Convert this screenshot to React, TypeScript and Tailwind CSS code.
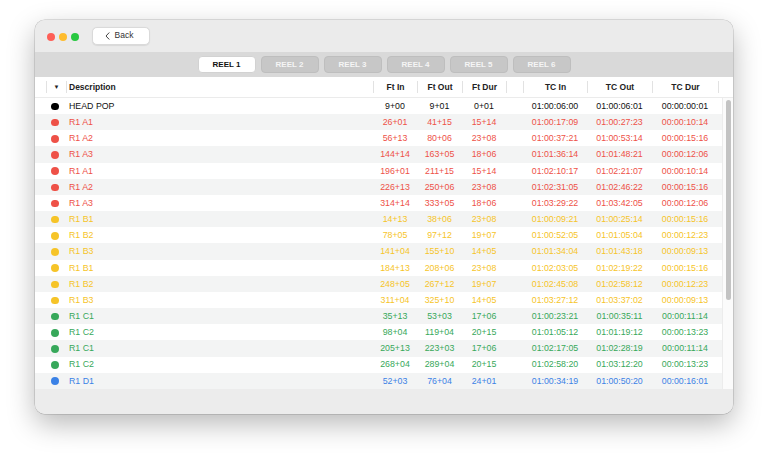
import React from "react";

type Row = [string, string, string, string, string, string, string, string];

const C: Record<string, string> = {
  k: "#000000",
  r: "#ee5147",
  y: "#f6c428",
  g: "#37a85a",
  b: "#3b82e6",
};

const rows: Row[] = [
  ["k", "HEAD POP", "9+00", "9+01", "0+01", "01:00:06:00", "01:00:06:01", "00:00:00:01"],
  ["r", "R1 A1", "26+01", "41+15", "15+14", "01:00:17:09", "01:00:27:23", "00:00:10:14"],
  ["r", "R1 A2", "56+13", "80+06", "23+08", "01:00:37:21", "01:00:53:14", "00:00:15:16"],
  ["r", "R1 A3", "144+14", "163+05", "18+06", "01:01:36:14", "01:01:48:21", "00:00:12:06"],
  ["r", "R1 A1", "196+01", "211+15", "15+14", "01:02:10:17", "01:02:21:07", "00:00:10:14"],
  ["r", "R1 A2", "226+13", "250+06", "23+08", "01:02:31:05", "01:02:46:22", "00:00:15:16"],
  ["r", "R1 A3", "314+14", "333+05", "18+06", "01:03:29:22", "01:03:42:05", "00:00:12:06"],
  ["y", "R1 B1", "14+13", "38+06", "23+08", "01:00:09:21", "01:00:25:14", "00:00:15:16"],
  ["y", "R1 B2", "78+05", "97+12", "19+07", "01:00:52:05", "01:01:05:04", "00:00:12:23"],
  ["y", "R1 B3", "141+04", "155+10", "14+05", "01:01:34:04", "01:01:43:18", "00:00:09:13"],
  ["y", "R1 B1", "184+13", "208+06", "23+08", "01:02:03:05", "01:02:19:22", "00:00:15:16"],
  ["y", "R1 B2", "248+05", "267+12", "19+07", "01:02:45:08", "01:02:58:12", "00:00:12:23"],
  ["y", "R1 B3", "311+04", "325+10", "14+05", "01:03:27:12", "01:03:37:02", "00:00:09:13"],
  ["g", "R1 C1", "35+13", "53+03", "17+06", "01:00:23:21", "01:00:35:11", "00:00:11:14"],
  ["g", "R1 C2", "98+04", "119+04", "20+15", "01:01:05:12", "01:01:19:12", "00:00:13:23"],
  ["g", "R1 C1", "205+13", "223+03", "17+06", "01:02:17:05", "01:02:28:19", "00:00:11:14"],
  ["g", "R1 C2", "268+04", "289+04", "20+15", "01:02:58:20", "01:03:12:20", "00:00:13:23"],
  ["b", "R1 D1", "52+03", "76+04", "24+01", "01:00:34:19", "01:00:50:20", "00:00:16:01"],
];

const grid =
  "grid grid-cols-[11px_20px_307px_44px_45px_44px_17px_64px_65px_66px_1fr]";

function HCell({ children, left = false }: { children?: React.ReactNode; left?: boolean }) {
  return (
    <div className="flex items-center h-[20px]">
      <div
        className={
          "flex items-center h-[12px] w-full border-l border-[#e2e2e2] " +
          (left ? "justify-start pl-[2px]" : "justify-center")
        }
      >
        {children}
      </div>
    </div>
  );
}

export default function App() {
  return (
    <div
      className="w-[768px] h-[457px] bg-white pl-[35px] pt-[20px]"
      style={{ fontFamily: '"Liberation Sans", Arial, sans-serif' }}
    >
      <div className="w-[698px] h-[394px] rounded-[10px] overflow-hidden flex flex-col bg-[#ececec] shadow-[0_0_0_0.5px_rgba(0,0,0,0.22),0_10px_28px_rgba(0,0,0,0.28)]">
        {/* title bar */}
        <div className="h-[32px] flex items-center pl-[12px] pt-[1px] bg-[#ebebeb]">
          <div className="flex gap-[4px]">
            <span className="w-[8px] h-[8px] rounded-full bg-[#fe5f57]" />
            <span className="w-[8px] h-[8px] rounded-full bg-[#febc2e]" />
            <span className="w-[8px] h-[8px] rounded-full bg-[#28c840]" />
          </div>
          <div className="ml-[13px] mt-[-2px] w-[58px] h-[18px] rounded-[5px] bg-white border border-[#dadada] shadow-[0_0.5px_1px_rgba(0,0,0,0.08)] flex items-center justify-center gap-[5px] text-[8.5px] text-[#333]">
            <svg width="5" height="8" viewBox="0 0 5 8" className="ml-[-4px]">
              <path d="M4 0.8 L1 4 L4 7.2" fill="none" stroke="#444" strokeWidth="1" strokeLinecap="round" strokeLinejoin="round" />
            </svg>
            <span className="font-medium">Back</span>
          </div>
        </div>

        {/* tab band */}
        <div className="h-[25px] bg-[#d9d9d9] flex items-center justify-center gap-[5px]">
          {["REEL 1", "REEL 2", "REEL 3", "REEL 4", "REEL 5", "REEL 6"].map((t, i) => (
            <div
              key={t}
              className={
                "h-[17px] w-[58px] rounded-[4px] flex items-center justify-center text-[8px] font-bold border " +
                (i === 0
                  ? "bg-white border-[#d2d2d2] text-[#111]"
                  : "bg-[#c7c7c7] border-[#bebebe] text-[#f5f5f5]")
              }
            >
              {t}
            </div>
          ))}
        </div>

        {/* table */}
        <div className="h-[312px] bg-white flex flex-col">
          <div className={grid + " h-[21px] border-b border-[#ebebeb] text-[8.5px] font-bold text-[#222]"}>
            <div />
            <HCell>
              <span className="text-[6px]">▼</span>
            </HCell>
            <HCell left>Description</HCell>
            <HCell>Ft In</HCell>
            <HCell>Ft Out</HCell>
            <HCell>Ft Dur</HCell>
            <HCell />
            <HCell>TC In</HCell>
            <HCell>TC Out</HCell>
            <HCell>TC Dur</HCell>
            <HCell />
          </div>
          <div className="flex flex-1">
            <div className="w-[687px] flex flex-col">
              {rows.map((r, i) => {
                const col = C[r[0]];
                return (
                  <div
                    key={i}
                    className={
                      grid +
                      " h-[16.17px] items-center text-[8.8px] pt-[1px] " +
                      (i % 2 === 1 ? "bg-[#f3f4f4]" : "bg-white")
                    }
                    style={{ color: r[0] === "k" ? "#111" : col }}
                  >
                    <div />
                    <div className="flex items-center pl-[5px]">
                      <span className="w-[7.5px] h-[7.5px] rounded-full" style={{ background: col }} />
                    </div>
                    <div className="pl-[3px]">{r[1]}</div>
                    <div className="text-center">{r[2]}</div>
                    <div className="text-center">{r[3]}</div>
                    <div className="text-center">{r[4]}</div>
                    <div />
                    <div className="text-center">{r[5]}</div>
                    <div className="text-center">{r[6]}</div>
                    <div className="text-center">{r[7]}</div>
                    <div />
                  </div>
                );
              })}
            </div>
            <div className="w-[11px] border-l border-[#ececec] bg-[#fbfbfb] flex justify-center pt-[2px]">
              <div className="w-[5px] h-[200px] rounded-full bg-[#c3c3c3]" />
            </div>
          </div>
        </div>

        {/* bottom bar */}
        <div className="h-[25px] bg-[#ececec]" />
      </div>
    </div>
  );
}
